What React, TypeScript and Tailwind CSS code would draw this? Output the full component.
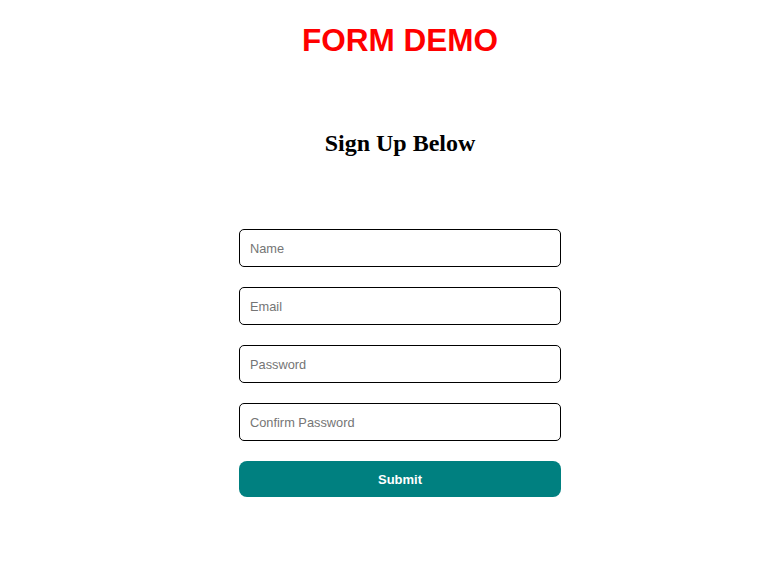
import React from 'react';

const fields = ['Name', 'Email', 'Password', 'Confirm Password'];

export default function App() {
  return (
    <div className="min-h-screen bg-white pl-[41px]">
      <div className="flex flex-col items-center">
        <h1
          className="mt-[22px] text-[31.5px] font-bold leading-[36px] text-[#ff0000]"
          style={{ fontFamily: '"Liberation Sans", Arial, sans-serif' }}
        >
          FORM DEMO
        </h1>
        <h2
          className="mt-[72px] text-[24px] font-bold leading-[27px] text-black"
          style={{ fontFamily: '"Liberation Serif", "Times New Roman", serif' }}
        >
          Sign Up Below
        </h2>
        <form
          className="mt-[72px] flex w-[322px] flex-col gap-5"
          style={{ fontFamily: '"Liberation Sans", Arial, sans-serif' }}
          onSubmit={(e) => e.preventDefault()}
        >
          {fields.map((f) => (
            <input
              key={f}
              type={f.includes('Password') ? 'password' : f === 'Email' ? 'email' : 'text'}
              placeholder={f}
              className="h-[38px] w-full rounded-[5px] border border-black px-[10px] text-[12.8px] text-black outline-none placeholder:text-[#757575]"
            />
          ))}
          <button
            type="submit"
            className="h-[36px] w-full rounded-[8px] bg-[#008080] pt-[2px] text-[13px] font-bold text-white"
          >
            Submit
          </button>
        </form>
      </div>
    </div>
  );
}
